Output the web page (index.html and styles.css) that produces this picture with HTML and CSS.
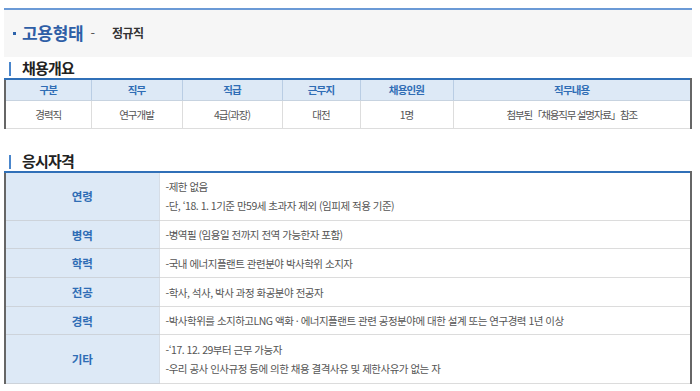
FILE: index.html
```html
<!DOCTYPE html>
<html lang="ko">
<head>
<meta charset="utf-8">
<link rel="stylesheet" href="styles.css">
</head>
<body>
<div class="wrap">
  <div class="top">
    <span class="bullet"></span>
    <span class="top-title">고용형태</span>
    <span class="top-dash">-</span>
    <span class="top-val">정규직</span>
  </div>

  <div class="sec-title"><span class="bar"></span><span class="sec-text">채용개요</span></div>
  <table class="t1">
    <colgroup>
      <col class="c1"><col class="c2"><col class="c3"><col class="c4"><col class="c5"><col class="c6">
    </colgroup>
    <thead>
      <tr><th>구분</th><th>직무</th><th>직급</th><th>근무지</th><th>채용인원</th><th>직무내용</th></tr>
    </thead>
    <tbody>
      <tr><td>경력직</td><td>연구개발</td><td>4급(과장)</td><td>대전</td><td>1명</td><td class="desc">첨부된「채용직무 설명자료」참조</td></tr>
    </tbody>
  </table>

  <div class="sec-title sec2"><span class="bar"></span><span class="sec-text">응시자격</span></div>
  <table class="t2">
    <colgroup><col class="h"><col class="v"></colgroup>
    <tbody>
      <tr class="tall"><th>연령</th><td><p>-제한 없음</p><p>-단, ‘18. 1. 1기준 만59세 초과자 제외 (임피제 적용 기준)</p></td></tr>
      <tr class="r28"><th>병역</th><td><p>-병역필 (임용일 전까지 전역 가능한자 포함)</p></td></tr>
      <tr class="r29"><th>학력</th><td><p>-국내 에너지플랜트 관련분야 박사학위 소지자</p></td></tr>
      <tr class="r29"><th>전공</th><td><p>-학사, 석사, 박사 과정 화공분야 전공자</p></td></tr>
      <tr class="r28"><th>경력</th><td><p>-박사학위를 소지하고LNG 액화 · 에너지플랜트 관련 공정분야에 대한 설계 또는 연구경력 1년 이상</p></td></tr>
      <tr class="tall"><th>기타</th><td><p>-‘17. 12. 29부터 근무 가능자</p><p>-우리 공사 인사규정 등에 의한 채용 결격사유 및 제한사유가 없는 자</p></td></tr>
    </tbody>
  </table>
</div>
</body>
</html>
```

FILE: styles.css
```css
* { box-sizing: border-box; }
html, body { margin: 0; padding: 0; background: #fff; }
body {
  font-family: "Noto Sans CJK KR", "Noto Sans", sans-serif;
  color: #555;
}
.wrap {
  width: 700px;
  padding: 8px 8px 0 4px;
}
.top {
  height: 49px;
  background: #f6f6f6;
  border-top: 2px solid #6b9ad6;
  display: flex;
  align-items: center;
  padding-left: 9px;
  padding-bottom: 2px;
}
.bullet {
  width: 3px;
  height: 3px;
  background: #2e63ab;
  margin-right: 6px;
  margin-top: 2px;
}
.top-title {
  font-size: 17px;
  font-weight: bold;
  color: #2e5ea6;
  letter-spacing: -0.3px;
}
.top-dash {
  font-size: 13px;
  color: #555;
  margin-left: 7px;
  margin-right: 17px;
}
.top-val {
  font-size: 12px;
  font-weight: bold;
  color: #333;
  letter-spacing: -0.5px;
}
.sec-title {
  height: 21px;
  display: flex;
  align-items: center;
  padding-left: 5px;
}
.sec2 { margin-top: 21px; }
.bar {
  width: 2px;
  height: 14px;
  background: #4a86cc;
  margin-top: 3px;
}
.sec-text {
  margin-left: 11px;
  font-size: 15px;
  font-weight: bold;
  color: #222;
  letter-spacing: -0.8px;
}
table {
  border-collapse: collapse;
  width: 688px;
  table-layout: fixed;
}
.t1 {
  border-top: 2px solid #3070b8;
  border-left: 2px solid #666;
  border-right: 2px solid #666;
}
.c1 { width: 86px; }
.c2 { width: 91px; }
.c3 { width: 100px; }
.c4 { width: 78px; }
.c5 { width: 93px; }
.c6 { width: auto; }
.t1 th {
  height: 21px;
  background: #dde9f6;
  color: #2f6db5;
  font-size: 10.5px;
  font-weight: bold;
  letter-spacing: -0.8px;
  border-left: 1px solid #b9cde4;
  border-bottom: 1px solid #c7d3e0;
  padding: 0;
}
.t1 td {
  height: 28px;
  text-align: center;
  font-size: 10.5px;
  color: #555;
  letter-spacing: -1px;
  border-left: 1px solid #ddd;
  border-bottom: 1px solid #ddd;
  padding: 0;
}
.t1 td.desc { letter-spacing: -1.2px; }
.t2 {
  border-top: 2px solid #3070b8;
  border-left: 2px solid #666;
  border-right: 2px solid #666;
}
.t2 .h { width: 154px; }
.t2 th {
  background: #dde9f6;
  color: #2f6db5;
  font-size: 11.5px;
  font-weight: bold;
  letter-spacing: 0;
  border-bottom: 1px solid #cdd3da;
  border-right: 1px solid #d6dde6;
  padding: 0;
}
.t2 td {
  padding: 0 0 0 6px;
  font-size: 10.5px;
  color: #555;
  letter-spacing: -0.5px;
  border-bottom: 1px solid #dcdcdc;
}
.t2 td p {
  margin: 0;
  line-height: 19px;
}
.t2 tr.tall th, .t2 tr.tall td { height: 49px; }
.t2 tr.r28 th, .t2 tr.r28 td { height: 28px; }
.t2 tr.r29 th, .t2 tr.r29 td { height: 29px; }
```
